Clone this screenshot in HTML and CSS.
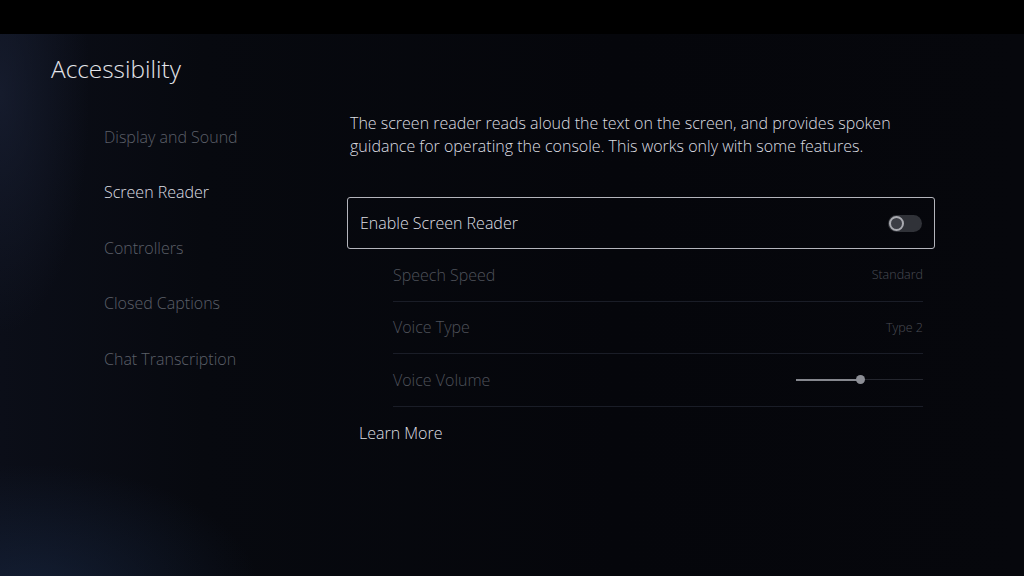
FILE: index.html
```html
<!DOCTYPE html>
<html lang="en">
<head>
  <meta charset="UTF-8">
  <title>Accessibility</title>
  <link rel="stylesheet" href="styles.css">
</head>
<body>
  <div class="letterbox"></div>
  <div class="screen">
    <h1 class="title">Accessibility</h1>

    <div class="content">
      <!-- Left menu -->
      <ul class="menu">
        <li>Display and Sound</li>
        <li class="active">Screen Reader</li>
        <li>Controllers</li>
        <li>Closed Captions</li>
        <li>Chat Transcription</li>
      </ul>

      <!-- Settings -->
      <div class="main">
        <p class="desc">The screen reader reads aloud the text on the screen, and provides spoken guidance for operating the console. This works only with some features.</p>

        <div class="option focused">
          <span>Enable Screen Reader</span>
          <span class="toggle"><span class="knob"></span></span>
        </div>

        <div class="sub-list">
          <div class="row">
            <span>Speech Speed</span>
            <span class="value">Standard</span>
          </div>
          <div class="row">
            <span>Voice Type</span>
            <span class="value">Type 2</span>
          </div>
          <div class="row">
            <span>Voice Volume</span>
            <span class="slider">
              <span class="fill" style="width: 64px"></span>
              <span class="thumb" style="left: 64px"></span>
            </span>
          </div>
        </div>

        <div class="option">Learn More</div>
      </div>
    </div>
  </div>
</body>
</html>
```

FILE: styles.css
```css
body {
  margin: 0;
  background: #000;
  font-family: "Open Sans", "Noto Sans", sans-serif;
  font-weight: 300;
  overflow: hidden;
}

.letterbox {
  height: 34px;
  background: #000;
}

.screen {
  height: 542px;
  background:
    radial-gradient(ellipse 230px 130px at 30px 560px, rgba(30, 50, 85, 0.45), transparent),
    radial-gradient(ellipse 90px 240px at 0px 60px, rgba(28, 36, 58, 0.6), transparent),
    linear-gradient(90deg, #0b0e18 0%, #07090f 20%, #05060b 60%, #06070c 100%);
}

.title {
  margin: 0;
  padding: 19px 0 0 51px;
  font-size: 24.4px;
  line-height: 32px;
  font-weight: 300;
  color: #e4e5ea;
}

.content {
  display: grid;
  grid-template-columns: 243px 588px;
  margin-top: 24px;
  padding-left: 104px;
}

.menu {
  list-style: none;
  margin: 0;
  padding: 0;
}

.menu li {
  height: 55.5px;
  display: flex;
  align-items: center;
  font-size: 16px;
  color: #5b5f68;
}

.menu li.active {
  color: #dcdde2;
}

.desc {
  margin: 3px 0 0 3px;
  font-size: 16px;
  line-height: 23px;
  color: #dcdde1;
}

.option {
  height: 52px;
  display: flex;
  align-items: center;
  justify-content: space-between;
  padding: 0 12px;
  font-size: 16px;
  color: #dedfe3;
}

.option.focused {
  margin-top: 39px;
  height: 50px;
  border: 1.5px solid #b4b5bc;
  border-radius: 3px;
}

.toggle {
  position: relative;
  width: 34px;
  height: 17px;
  border-radius: 9px;
  background: #303238;
}

.knob {
  position: absolute;
  left: 1px;
  top: 1px;
  width: 11px;
  height: 11px;
  border: 2px solid #a9aab0;
  border-radius: 50%;
  background: #3c3e45;
}

.sub-list {
  margin: 0 12px 0 46px;
}

.row {
  height: 51.5px;
  display: flex;
  align-items: center;
  justify-content: space-between;
  border-bottom: 1px solid #1a1d27;
  font-size: 16px;
  color: #4e515a;
}

.value {
  font-size: 12.5px;
  color: #4a4d55;
}

.slider {
  position: relative;
  width: 127px;
  height: 1px;
  background: #24262e;
}

.fill {
  position: absolute;
  left: 0;
  top: -0.5px;
  height: 2px;
  background: #85878e;
}

.thumb {
  position: absolute;
  top: -4px;
  width: 9px;
  height: 9px;
  margin-left: -4.5px;
  border-radius: 50%;
  background: #8c8e95;
}
```
